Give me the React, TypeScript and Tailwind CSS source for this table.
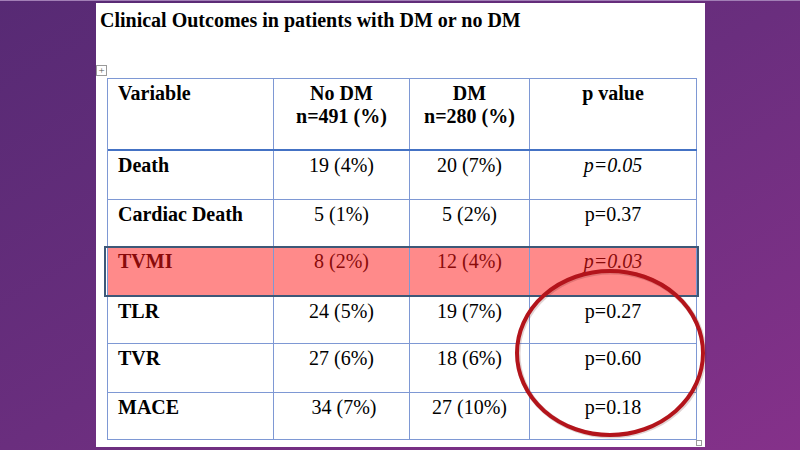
const serif = { fontFamily: '"Liberation Serif", "Times New Roman", serif' };

const rows = [
  { label: "Death", a: "19 (4%)", b: "20 (7%)", p: "p=0.05", italic: true, h: "h-[49px]" },
  { label: "Cardiac Death", a: "5 (1%)", b: "5 (2%)", p: "p=0.37", h: "h-[47px]" },
  { label: "TVMI", a: "8 (2%)", b: "12 (4%)", p: "p=0.03", italic: true, hot: true, h: "h-[50px]" },
  { label: "TLR", a: "24 (5%)", b: "19 (7%)", p: "p=0.27", h: "h-[47px]" },
  { label: "TVR", a: "27 (6%)", b: "18 (6%)", p: "p=0.60", h: "h-[49px]" },
  { label: "MACE", a: "\u00a034 (7%)", b: "27 (10%)", p: "p=0.18", h: "h-[47px]" },
];

function Row({ r }: { r: (typeof rows)[number] }) {
  const cell = "h-full border-r border-[#7e98d4] pt-[3px] leading-[23px]";
  return (
    <div
      className={`relative flex border-b border-[#7e98d4] ${r.h} ${
        r.hot ? "bg-[#ff8a8a] text-[#8a0a0a]" : "text-black"
      }`}
    >
      <div className={`${cell} w-[166px] pl-[10px] font-bold`}>{r.label}</div>
      <div className={`${cell} w-[136px] text-center`}>{r.a}</div>
      <div className={`${cell} w-[120px] text-center`}>{r.b}</div>
      <div className={`${cell} w-[167px] text-center ${r.italic ? "italic" : ""}`}>{r.p}</div>
      {r.hot && (
        <div className="absolute -left-[4px] -right-[2px] -top-[1px] -bottom-[1px] border-2 border-[#3d5878]" />
      )}
    </div>
  );
}

export default function App() {
  return (
    <div
      className="relative h-[450px] w-[800px] overflow-hidden bg-gradient-to-br from-[#572a74] via-[#6a2e7e] to-[#85318a] pt-[3px]"
      style={serif}
    >
      <div className="absolute left-0 right-0 top-0 h-px bg-[#a27fb6]" />
      <div className="relative ml-[96px] h-[444px] w-[609px] bg-white">
        <h1 className="pl-[4px] pt-[6px] text-[20px] font-bold leading-[23px] text-black">
          Clinical Outcomes in patients with DM or no DM
        </h1>

        {/* table move handle */}
        <div className="absolute left-0 top-[62px] flex h-[11px] w-[11px] items-center justify-center border border-[#9a9a9a] bg-white text-[11px] leading-none text-[#555]">
          +
        </div>

        <div className="ml-[11px] mt-[46px] w-[590px] border-l border-t border-[#7e98d4] text-[20px]">
          <div className="flex h-[72px] border-b-2 border-[#4472c4] font-bold text-black">
            <div className="h-full w-[166px] border-r border-[#7e98d4] pl-[10px] pt-[3px] leading-[23px]">
              Variable
            </div>
            <div className="h-full w-[136px] border-r border-[#7e98d4] pt-[3px] text-center leading-[23px]">
              No DM
              <br />
              n=491 (%)
            </div>
            <div className="h-full w-[120px] border-r border-[#7e98d4] pt-[3px] text-center leading-[23px]">
              DM
              <br />
              n=280 (%)
            </div>
            <div className="h-full w-[167px] border-r border-[#7e98d4] pt-[3px] text-center leading-[23px]">
              p value
            </div>
          </div>
          {rows.map((r) => (
            <Row key={r.label} r={r} />
          ))}
        </div>

        {/* resize handle */}
        <div className="absolute left-[600px] top-[437px] h-[6px] w-[6px] border border-[#9a9a9a] bg-white" />
      </div>

      {/* red ellipse annotation */}
      <svg className="absolute left-0 top-0" width="800" height="450" viewBox="0 0 800 450">
        <ellipse cx="611" cy="354" rx="93" ry="82" fill="none" stroke="#5a1010" strokeOpacity="0.18" strokeWidth="5" />
        <ellipse cx="610" cy="353" rx="93" ry="82" fill="none" stroke="#b3141b" strokeWidth="4" />
      </svg>
    </div>
  );
}
